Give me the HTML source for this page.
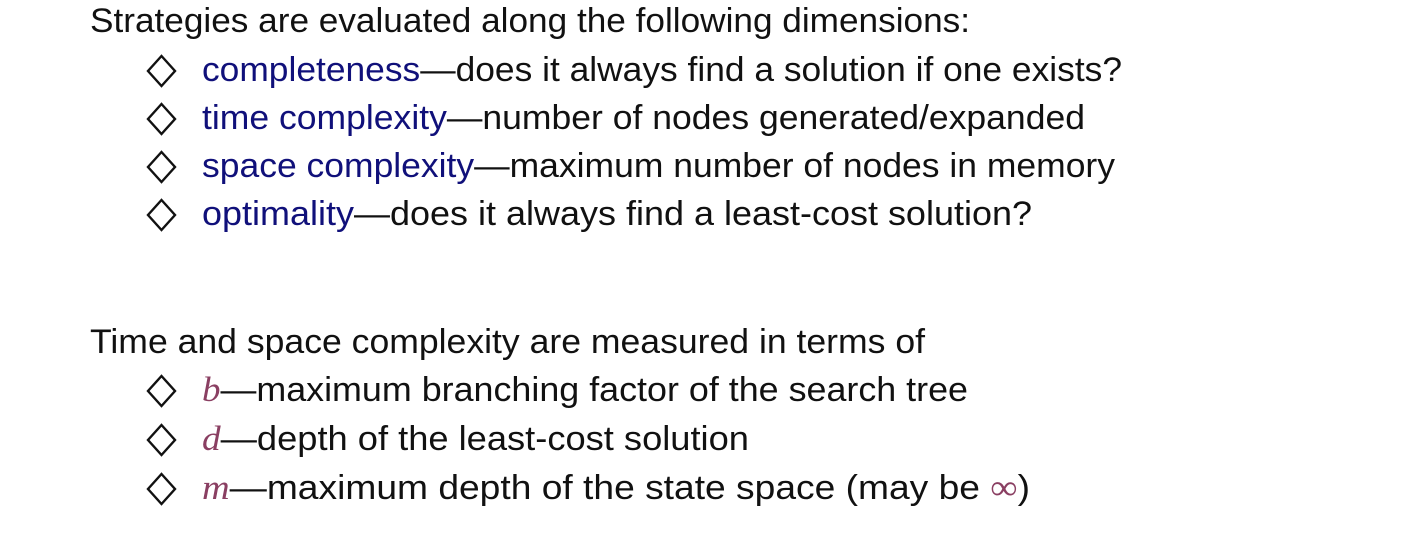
<!DOCTYPE html>
<html><head><meta charset="utf-8"><style>
html,body{margin:0;padding:0;background:#fff;width:1411px;height:533px;overflow:hidden}
svg{display:block}
text{font-family:"Liberation Sans",sans-serif;font-size:34px;fill:#111}
.b{fill:#10107a}
.m{fill:#8a3f62;font-family:"Liberation Serif",serif;font-style:italic;font-size:35px}
</style></head><body>
<svg width="1411" height="533" viewBox="0 0 1411 533">
<g fill="none" stroke="#111" stroke-width="2.4" stroke-linejoin="miter">
<path d="M161.5 56 L175 71 L161.5 86 L148 71 Z"/>
<path d="M161.5 104 L175 119 L161.5 134 L148 119 Z"/>
<path d="M161.5 152 L175 167 L161.5 182 L148 167 Z"/>
<path d="M161.5 200 L175 215 L161.5 230 L148 215 Z"/>
<path d="M161.5 376 L175 391 L161.5 406 L148 391 Z"/>
<path d="M161.5 425 L175 440 L161.5 455 L148 440 Z"/>
<path d="M161.5 474 L175 489 L161.5 504 L148 489 Z"/>
</g>
<text x="90" y="32" textLength="880" lengthAdjust="spacingAndGlyphs">Strategies are evaluated along the following dimensions:</text>
<text x="202" y="81" textLength="920" lengthAdjust="spacingAndGlyphs"><tspan class="b">completeness</tspan>—does it always find a solution if one exists?</text>
<text x="202" y="129" textLength="883" lengthAdjust="spacingAndGlyphs"><tspan class="b">time complexity</tspan>—number of nodes generated/expanded</text>
<text x="202" y="177" textLength="913" lengthAdjust="spacingAndGlyphs"><tspan class="b">space complexity</tspan>—maximum number of nodes in memory</text>
<text x="202" y="225" textLength="830" lengthAdjust="spacingAndGlyphs"><tspan class="b">optimality</tspan>—does it always find a least-cost solution?</text>
<text x="90" y="353" textLength="835" lengthAdjust="spacingAndGlyphs">Time and space complexity are measured in terms of</text>
<text x="202" y="401" textLength="766" lengthAdjust="spacingAndGlyphs"><tspan class="m">b</tspan>—maximum branching factor of the search tree</text>
<text x="202" y="450" textLength="547" lengthAdjust="spacingAndGlyphs"><tspan class="m">d</tspan>—depth of the least-cost solution</text>
<text x="202" y="499" textLength="828" lengthAdjust="spacingAndGlyphs"><tspan class="m">m</tspan>—maximum depth of the state space (may be <tspan class="m" style="font-style:normal">∞</tspan>)</text>
</svg>
</body></html>
